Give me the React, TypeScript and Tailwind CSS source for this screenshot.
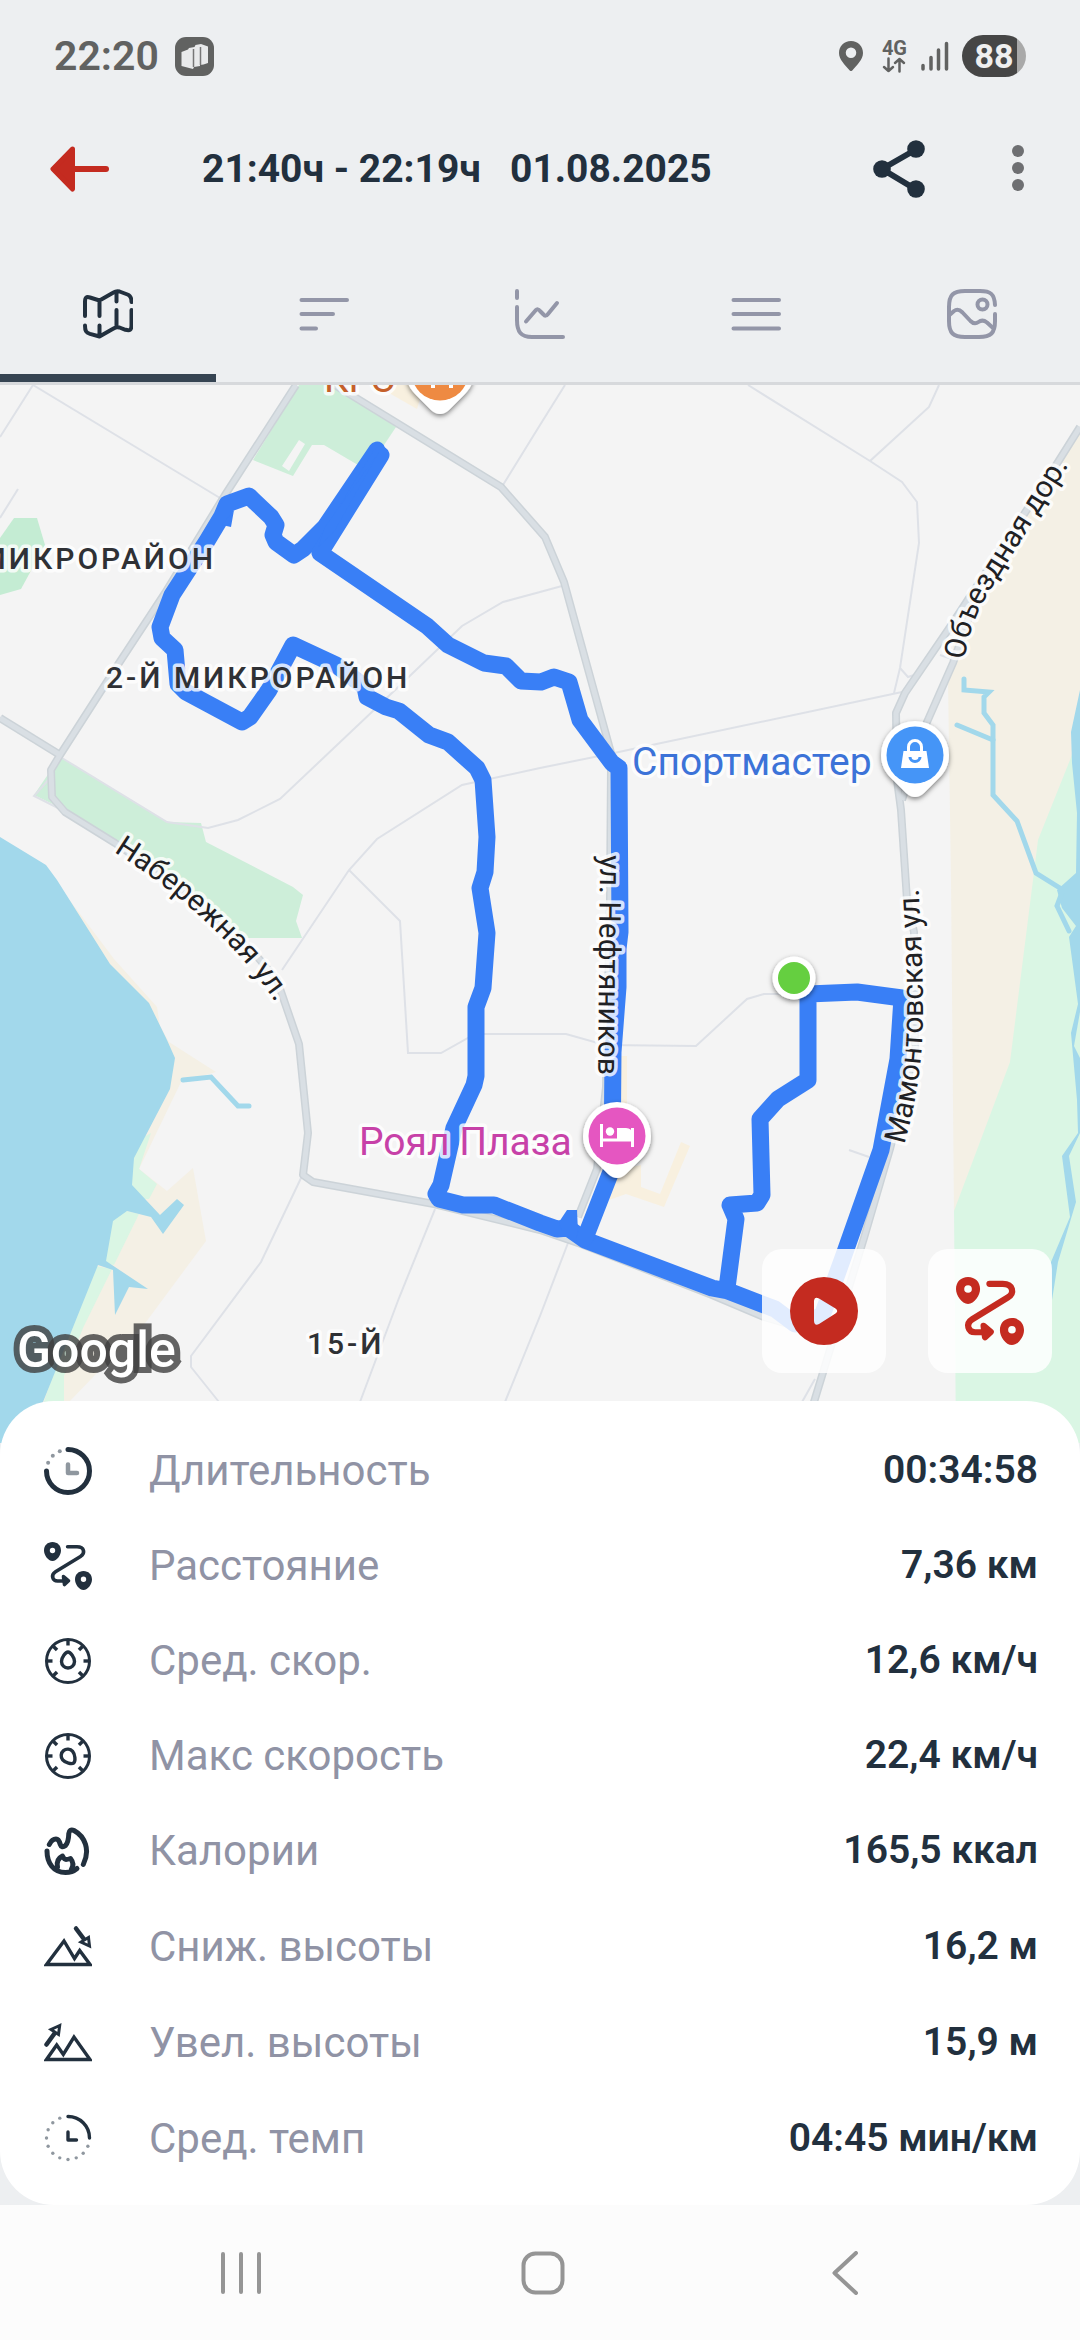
function RouteIcon({ className, stroke }: { className: string; stroke: number }) {
  return (
    <svg viewBox="0 0 48 48" className={className} fill="none" stroke="currentColor" strokeWidth={stroke} strokeLinecap="round" strokeLinejoin="round">
      <path d="M23.6 4.8H33C40.500 4.800 41.500 11.500 36.500 14.500L11.500 29.800C6.500 33 8.500 39 13.500 39H20" />
      <path d="M19.500 34.500L24.500 38.800L20.500 42.500Z" fill="currentColor" />
      <path fill="currentColor" stroke="none" fillRule="evenodd" d="M8.500 0C3.500 0 0 3.500 0 8.500C0 13 4 19 8.500 19C13 19 17 13 17 8.500C17 3.500 13.500 0 8.500 0ZM8.500 5.800A2.700 2.700 0 1 1 8.500 11.200A2.700 2.700 0 1 1 8.500 5.800Z" />
      <path fill="currentColor" stroke="none" fillRule="evenodd" d="M39.500 29C34.500 29 31 32.500 31 37.500C31 42 35 48 39.500 48C44 48 48 42 48 37.500C48 32.500 44.500 29 39.500 29ZM39.500 34.500A2.700 2.700 0 1 1 39.500 39.900A2.700 2.700 0 1 1 39.500 34.500Z" />
    </svg>
  )
}

function StatIcon({ children }: { children: React.ReactNode }) {
  return (
    <svg viewBox="0 0 48 48" className="size-12" fill="none" stroke="currentColor" strokeWidth={3.4} strokeLinecap="round" strokeLinejoin="round">
      {children}
    </svg>
  )
}

function Dots({ from, to, r }: { from: number; to: number; r: number }) {
  const dots = []
  for (let i = from; i <= to; i++) {
    const a = (i * Math.PI) / 8
    dots.push(<circle key={i} cx={24 + 21.5 * Math.sin(a)} cy={24 - 21.5 * Math.cos(a)} r={r} fill="#8f979f" stroke="none" />)
  }
  return <>{dots}</>
}

function Gauge({ angle }: { angle: number }) {
  return (
    <StatIcon>
      <circle cx="24" cy="24" r="21.500" strokeWidth={3} />
      {[-135, -90, -45, 0, 45, 90, 135].map((a) => (
        <path key={a} d="M24 3.500V8.500" strokeLinecap="butt" transform={`rotate(${a} 24 24)`} />
      ))}
      <path d="M24 15C21.500 15 17.500 20.500 17.500 24.500A6.500 6.500 0 0 0 30.500 24.500C30.500 20.500 26.500 15 24 15Z" transform={`rotate(${angle} 24 24)`} />
    </StatIcon>
  )
}

const motionStats = [
  {
    label: "Длительность",
    value: "00:34:58",
    icon: (
      <StatIcon>
        <path d="M24 2.500A21.500 21.500 0 1 1 2.500 24" strokeWidth={5} />
        <Dots from={13} to={15} r={2} />
        <path d="M24 17.500V26H33" stroke="#8f979f" strokeWidth={4.500} />
      </StatIcon>
    ),
  },
  { label: "Расстояние", value: "7,36 км", icon: <RouteIcon className="size-12" stroke={3.6} /> },
  { label: "Сред. скор.", value: "12,6 км/ч", icon: <Gauge angle={0} /> },
  { label: "Макс скорость", value: "22,4 км/ч", icon: <Gauge angle={140} /> },
  {
    label: "Калории",
    value: "165,5 ккал",
    icon: (
      <StatIcon>
        <g strokeWidth={5}>
          <path d="M39.300 37.500C46.500 23 41 9.500 30 3.500C27 2 25 3.500 24.800 6.500C24.600 12 24 16 21.500 18.500C19 20.500 17 20 16.300 17.500C15.500 14.500 14.500 12 12 12C9.500 12 7 14 5.300 17.500" />
          <path d="M3 24C3 36 9.500 45.500 21.500 45.500C26 45.500 30 44 33 41.500" />
          <path d="M13.500 40C12.500 35 14.500 31 18.500 29C19.500 31 20.500 32.500 22 32.500C23.500 32.500 25 32 26.500 31.500C28.500 34 30 38 27.500 42" />
        </g>
      </StatIcon>
    ),
  },
]

const altitudeStats = [
  {
    label: "Сниж. высоты",
    value: "16,2 м",
    icon: (
      <StatIcon>
        <g strokeLinejoin="miter">
          <path d="M2.500 42.500L20 19L30.500 36.500L35.700 28.500L46 42.500Z" />
          <path d="M32 6.500L39.500 16.500" strokeWidth={4.500} />
          <path d="M45.500 24L44.500 15.500L37 20Z" strokeWidth={3} />
        </g>
      </StatIcon>
    ),
  },
  {
    label: "Увел. высоты",
    value: "15,9 м",
    icon: (
      <StatIcon>
        <g strokeLinejoin="miter">
          <path d="M2.500 41.500L12.700 27L19.300 36.500L30 19L46 41.500Z" />
          <path d="M2.500 26.500L10.500 15.500" strokeWidth={4.500} />
          <path d="M15.700 7.500L7 11.500L14.500 16.500Z" strokeWidth={3} />
        </g>
      </StatIcon>
    ),
  },
  {
    label: "Сред. темп",
    value: "04:45 мин/км",
    icon: (
      <StatIcon>
        <path d="M24 2.500A21.500 21.500 0 0 1 45.500 24" />
        <Dots from={5} to={15} r={1.700} />
        <path d="M24 18V26H32.500" />
      </StatIcon>
    ),
  },
]

const tabs = [
  {
    name: "Карта",
    icon: (
      <path d="M2 27V13C2 8 3.500 7.500 7 8.500L16.500 11.500L30.500 3.500Q33.500 1.500 36.500 2.500L44.500 5.500Q48.500 7 48.500 13M16.500 11.500V27M33.500 3V12.500M2 36.500C2 42 3 43.500 7 44.800L16.500 47.500L30.500 39.500Q33.500 37.500 36.500 38.500L42.500 40.800C47 42 48.500 41 48.500 36V21M16.500 36.500V47.500M33.500 21V38" />
    ),
  },
  { name: "Круги", icon: <path d="M2.500 11H48M2.500 25H34M2.500 39.500H17" /> },
  {
    name: "График",
    icon: <path d="M2 2V9M2 18V31C2 43 6 48 17 48H48M11 32.500L20.500 21.500Q23 19 25 22L28.500 25.500Q30.500 28 33 25L42 14" />,
  },
  { name: "Детали", icon: <path d="M2.500 11H48M2.500 25H48M2.500 39.500H48" /> },
  {
    name: "Фото",
    icon: (
      <>
        <path d="M48 16C47.500 5 43.500 2 33 2H18C6 2 2 6 2 18V32C2 44 6 48 18 48H32C44 48 48 44 48 32V25" />
        <circle cx="35.500" cy="15.500" r="5" />
        <path d="M2.500 26L7 22Q11 19 15.500 23.500L23.500 32Q27.500 36 31.500 33Q35.500 30 40 33.500L46 39" />
      </>
    ),
  },
]

const mainRoads = [
  "M296 385L225 495L165 593L119 663L60 755L51 770L52 797L65 812L115 843L190 895L255 954L277 980L299 1044L308 1133L303 1175L313 1182L434 1204L540 1230L581 1244L712 1295L764 1317L825 1335",
  "M0 718L60 755",
  "M335 385L501 487L545 537L564 582L613 760L611 768L610 900L606 1087L597 1169L578 1217",
  "M1080 427L1053 470L950 627L905 693L896 713L897 780L901 810L907 900L914 932L915 1050L890 1149L864 1238L814 1402L800 1450",
  "M975 600L953 663L927 722L902 800",
]

const sideStreets = [
  "M220 498L33 385L0 437",
  "M18 489L0 518",
  "M503 485L540 425L565 385",
  "M562 586L540 592L503 602L462 626L393 692L280 799L238 820L208 828L167 822L62 758",
  "M51 777L34 796L62 810",
  "M902 692L614 753L540 768L462 785L377 839L349 870L282 970",
  "M349 870L400 921L408 1053L441 1053L468 1038L484 1034H566L605 1045L696 1046L747 999L764 994H790",
  "M748 385L870 461L902 482L917 502L919 543L900 668L894 693",
  "M870 461L929 407L939 385",
  "M900 668L908 677L914 675",
  "M940 655L955 660",
  "M302 1176L261 1262L191 1356V1367L219 1402",
  "M435 1209L399 1298L360 1402",
  "M568 1243L540 1316L505 1402",
  "M849 1150L869 1157",
  "M815 1379L802 1402",
]

const track = [
  "M377 450L325 527L303 549L294 555L276 542L273 535L276 525L271 517L254 501L249 496L227 504L222 516L207 541L172 595L160 627L162 638L175 650L178 684L186 692L242 722L250 717L269 690L293 645L336 665L365 687L367 697L386 707L399 711L429 735L448 742L477 768L483 780L487 837L485 872L480 888L487 933L483 988L476 1007V1076L474 1085L454 1128L441 1185L436 1194L439 1199L463 1205H494L540 1223L557 1229L568 1228L585 1240L712 1288L728 1291L775 1309L795 1324L822 1316L845 1252L881 1150L898 1059L902 998L857 992L808 994V1080L778 1099L760 1119L762 1195L757 1203L730 1205L736 1219L727 1288",
  "M381 455L320 553L427 626L448 645L484 663L506 666L521 681L541 682L554 677L569 682L580 720L612 763L619 768L620 932L618 949V987L613 1052L612 1169L585 1238",
]

function Pin({ x, y, color, children }: { x: number; y: number; color: string; children?: React.ReactNode }) {
  return (
    <g transform={`translate(${x} ${y})`}>
      <path d="M0 -34A34 34 0 0 0 -34 0C-34 10 -30 17 -24 23L-9 38Q0 46 9 38L24 23C30 17 34 10 34 0A34 34 0 0 0 0 -34Z" fill="#fff" filter="url(#shadow)" />
      <circle r="28.500" fill={color} />
      {children}
    </g>
  )
}

function MapView() {
  return (
    <svg viewBox="0 385 1080 1058" className="block w-full" role="img" aria-label="Карта маршрута">
      <defs>
        <filter id="shadow" x="-30%" y="-30%" width="160%" height="160%">
          <feDropShadow dx="0" dy="2" stdDeviation="2.500" floodOpacity="0.5" />
        </filter>
        <path id="naberezhnaya" d="M114 852C165 884 228 933 274 1000" />
        <path id="neftyanikov" d="M600 855L598 1085" />
        <path id="mamontovskaya" d="M904 1145C917 1100 923 1060 923 1010C923 970 921 930 918 880" />
        <path id="obezdnaya" d="M965 660C967 635 978 609 992 587L1072 460" />
      </defs>
      <rect y="385" width="1080" height="1058" fill="#f4f4f4" />

      {/* sand */}
      <g fill="#f4f0e5">
        <path d="M1080 427L953 640V663L948 680L951 880L954 1215L1080 1300Z" />
        <path d="M50 880L62 890L114 959L157 1007L160 1026L169 1042L216 1072L181 1082L139 1169L167 1191L193 1168L206 1241L146 1322L69 1402L40 1443L0 1443V860Z" />
      </g>
      <path fill="#f8f0df" d="M621 1056H627V1110H621ZM609 1200L626 1194L664 1207L690 1146L681 1142L660 1194L641 1187V1165L617 1170ZM375 385L417 409L424 385Z" />

      {/* parks and shore */}
      <g fill="#cdeed9">
        <path fillRule="evenodd" d="M299 385H335L396 427L384 445L358 465L324 445H312L293 476L253 460ZM299 440L305 444L289 471L282 466Z" />
        <path d="M14 518H37L45 545L21 589L0 595V538Z" fill="#c4ecd3" />
        <path d="M62 758L167 822L201 823L206 842L293 887L303 895L296 921L302 938H240L115 842L65 810L34 795L51 770Z" />
      </g>
      <g fill="#daf6e4">
        <path d="M1080 730L1070 760L1038 840L1033 880L1010 1062L954 1211L956 1443H1080Z" />
        <path d="M151 1133L139 1169L157 1184L149 1199L120 1200V1150Z" />
        <path d="M139 1214L114 1265L100 1262V1205Z" />
        <path d="M90 1265L112 1269L83 1328L64 1376V1402L50 1443H30Z" />
      </g>

      {/* water */}
      <g fill="#a2d8eb">
        <path d="M0 837L46 865L57 880L110 964L149 1003L167 1040L175 1058L170 1089L134 1158L132 1185L160 1215L177 1199L184 1205L163 1234L151 1217L127 1211L113 1221L106 1261L148 1289L129 1287L115 1315L113 1270L98 1265L43 1402L30 1443H0Z" />
        <path d="M1080 690L1071 732L1072 763L1077 813L1076 873L1057 890L1062 908L1076 926L1069 937L1078 1004L1071 1033L1077 1100L1078 1133L1062 1156L1070 1217L1051 1262L1052 1300L1058 1262L1076 1202L1069 1156L1080 1133Z" />
      </g>
      <path fill="#daf6e4" d="M1080 1012L1074 1046L1080 1058Z" />
      <g fill="none" stroke="#a2d8eb" strokeWidth="5" strokeLinecap="round">
        <path d="M183 1080L211 1077L238 1106H249" />
        <path d="M964 679V690L989 692L984 697V713L993 725V795L1017 821L1036 873L1063 890L1057 906L1069 931" />
        <path d="M957 725L993 740" />
      </g>

      {/* roads */}
      <g fill="none" stroke="#dee1e7" strokeWidth="2">
        {sideStreets.map((d) => <path key={d} d={d} />)}
      </g>
      <g fill="none" stroke="#ccd3d8" strokeWidth="8" strokeLinejoin="round">
        {mainRoads.map((d) => <path key={d} d={d} />)}
      </g>
      <g fill="none" stroke="#d9dfe4" strokeWidth="5" strokeLinejoin="round">
        {mainRoads.map((d) => <path key={d} d={d} />)}
      </g>

      {/* recorded track */}
      <g fill="none" stroke="#397ff6" strokeWidth="17" strokeLinejoin="round" strokeLinecap="round">
        {track.map((d) => <path key={d} d={d} />)}
      </g>
      <path fill="#397ff6" d="M559 1222L567 1210H577L578 1232H562ZM379 452L325 527L318 548L335 530ZM222 525L231 527L234 510Z" />

      {/* labels */}
      <g stroke="#fff" strokeOpacity="0.8" strokeWidth="7" strokeLinejoin="round" className="font-['Roboto',sans-serif] [paint-order:stroke]">
        <g fill="#2f3135" className="text-[30px] font-medium tracking-widest">
          <text x="216" y="569" textAnchor="end">МИКРОРАЙОН</text>
          <text x="106" y="688">2-Й МИКРОРАЙОН</text>
          <text x="307" y="1354">15-Й</text>
        </g>
        <g fill="#1f2124" className="text-[30px]">
          <text><textPath href="#naberezhnaya">Набережная ул.</textPath></text>
          <text><textPath href="#neftyanikov">ул. Нефтяников</textPath></text>
          <text><textPath href="#mamontovskaya">Мамонтовская ул.</textPath></text>
          <text><textPath href="#obezdnaya">Объездная дор.</textPath></text>
        </g>
        <g className="text-[39px]">
          <text x="632" y="775" fill="#3c73d8">Спортмастер</text>
          <text x="359" y="1155" fill="#c741a8">Роял Плаза</text>
          <text x="324" y="392" fill="#c5602a">KFC</text>
        </g>
      </g>

      <Pin x={915} y={755} color="#4595f7">
        <path d="M-11.500 -4H11.500L14 13H-14Z" fill="#fff" />
        <path d="M-6.500 -4V-8A6.500 6.500 0 0 1 6.500 -8V-4" fill="none" stroke="#fff" strokeWidth="3" />
        <path d="M-5 2A5 4.500 0 0 0 5 2" fill="none" stroke="#4595f7" strokeWidth="3" />
      </Pin>
      <Pin x={617} y={1136} color="#e556c1">
        <path d="M-15.500 -12V11M-15.500 4H15.500M15.500 -8V11" fill="none" stroke="#fff" strokeWidth="3" />
        <circle cx="-7" cy="-4.500" r="4.200" fill="#fff" />
        <path d="M0 4V-8H9Q15 -8 15 -2V4Z" fill="#fff" />
      </Pin>
      <Pin x={440} y={372} color="#ee8a42">
        <path d="M-7 4V16M11 4V16" stroke="#fff" strokeWidth="4" />
      </Pin>

      <circle cx="794" cy="978" r="21.500" fill="#fff" filter="url(#shadow)" />
      <circle cx="794" cy="978" r="16" fill="#65cf40" />

      <text x="17" y="1367" fill="#fff" stroke="#3f3f3f" strokeOpacity="0.8" strokeWidth="12" className="font-['Roboto',sans-serif] text-[50px] font-medium [paint-order:stroke]">Google</text>
    </svg>
  )
}

function StatusBar() {
  return (
    <div className="flex h-28 items-center justify-between px-[54px] text-[#616261]">
      <div className="flex items-center gap-4">
        <span className="text-[41px] font-semibold leading-none">22:20</span>
        <svg viewBox="0 0 39 39" className="size-[39px]">
          <rect width="39" height="39" rx="11" fill="currentColor" />
          <path d="M6.500 15L13 12.500L14 11L19.500 10L20.500 8L26 7L33 9.500V26L28.500 27.500L25 28V29L19 30L18 32L6.500 29Z" fill="#e9eaeb" />
          <path d="M18.500 12V30M25.500 10V28" stroke="#777" strokeWidth="1.500" />
        </svg>
      </div>
      <div className="flex items-center">
        <svg viewBox="0 0 24 30" className="mr-[19px] h-[30px] w-6" fill="currentColor">
          <path fillRule="evenodd" d="M12 0C5 0 0 5 0 12C0 18.500 6 24 10.500 29.300Q12 30.800 13.500 29.300C18 24 24 18.500 24 12C24 5 19 0 12 0ZM12 6.500A5 5 0 1 1 12 17A5 5 0 1 1 12 6.500Z" />
        </svg>
        <div className="mr-[14px] flex flex-col items-center">
          <span className="text-xl font-bold leading-[18px]">4G</span>
          <svg viewBox="0 0 24 16" className="h-4 w-6" fill="none" stroke="currentColor" strokeWidth="2.500" strokeLinecap="round" strokeLinejoin="round">
            <path d="M6.500 1.500V14M2 10L6.500 14L11 10M17.500 14.500V2M13 6L17.500 2L22 6" />
          </svg>
        </div>
        <svg viewBox="0 0 28 30" className="mr-[13px] h-[30px] w-7" stroke="currentColor" strokeWidth="3.500" strokeLinecap="round">
          <path d="M2 24.500V28M10 16.500V28M17.500 9V28M25.500 2.500V28" />
        </svg>
        <span className="flex h-[42px] w-16 items-center justify-center rounded-full bg-[linear-gradient(90deg,#464646_86%,#a9a9a9_86%)] text-[34px] font-bold leading-none text-[#efefef]">88</span>
      </div>
    </div>
  )
}

function Stats({ items, rowClass }: { items: typeof motionStats; rowClass: string }) {
  return (
    <dl>
      {items.map((item) => (
        <div key={item.label} className={`flex items-center ${rowClass}`}>
          {item.icon}
          <dt className="ml-[57px] flex-1 text-[42px] text-[#9093a5]">{item.label}</dt>
          <dd className="text-[39px] font-semibold">{item.value}</dd>
        </div>
      ))}
    </dl>
  )
}

function App() {
  return (
    <div className="flex min-h-dvh flex-col bg-[#edeff1] font-['Roboto',sans-serif] text-[#22303e]">
      <header className="border-b-3 border-[#d7d9dc]">
        <StatusBar />
        <div className="flex h-[114px] items-center pl-[50px] pr-14">
          <button aria-label="Назад" className="text-[#c42b20]">
            <svg viewBox="0 0 60 48" className="h-12 w-[60px]" stroke="currentColor" strokeWidth="5" strokeLinecap="round" strokeLinejoin="round">
              <path d="M22.500 4L3 24L22.500 44Z" fill="currentColor" />
              <path d="M24 24H56" strokeWidth="6" />
            </svg>
          </button>
          <h1 className="ml-[92px] flex-1 whitespace-pre text-[39px] font-bold">21:40ч - 22:19ч   01.08.2025</h1>
          <button aria-label="Поделиться">
            <svg viewBox="0 0 52 58" className="h-[58px] w-[52px]" fill="currentColor">
              <path d="M43 9.500L9 29L43 49.500" fill="none" stroke="currentColor" strokeWidth="6" />
              <circle cx="43" cy="9" r="8.800" />
              <circle cx="9" cy="29" r="8.800" />
              <circle cx="43" cy="49" r="8.800" />
            </svg>
          </button>
          <button aria-label="Ещё" className="ml-[87px] text-[#6e6f72]">
            <svg viewBox="0 0 12 48" className="h-12 w-3" fill="currentColor">
              <circle cx="6" cy="6" r="6" />
              <circle cx="6" cy="23" r="6" />
              <circle cx="6" cy="40" r="6" />
            </svg>
          </button>
        </div>
        <nav role="tablist" className="grid grid-cols-5">
          {tabs.map((tab, i) => (
            <button
              key={tab.name}
              role="tab"
              aria-label={tab.name}
              aria-selected={i === 0}
              className={`flex h-[156px] items-center justify-center border-b-8 pt-7 ${i === 0 ? "border-[#364452]" : "border-transparent text-[#9396a8]"}`}
            >
              <svg viewBox="0 0 50 50" className="size-[50px]" fill="none" stroke="currentColor" strokeWidth="4" strokeLinecap="round" strokeLinejoin="round">
                {tab.icon}
              </svg>
            </button>
          ))}
        </nav>
      </header>

      <main className="flex-1">
        <section className="relative overflow-hidden">
          <MapView />
          <div className="absolute bottom-[70px] right-7 flex gap-[42px] text-[#c42b20]">
            <button aria-label="Воспроизвести" className="flex size-[124px] items-center justify-center rounded-[20px] bg-white/85">
              <svg viewBox="0 0 68 68" className="size-[68px]" fill="currentColor">
                <path fillRule="evenodd" d="M34 0A34 34 0 1 1 34 68A34 34 0 1 1 34 0ZM24 24V44Q24.500 49.500 29 47L45.500 36.500Q49 34 45.500 31.500L29 21.500Q24.500 19 24 24Z" />
              </svg>
            </button>
            <button aria-label="Маршрут" className="flex size-[124px] items-center justify-center rounded-[20px] bg-white/85">
              <RouteIcon className="size-[68px]" stroke={4.400} />
            </button>
          </div>
        </section>

        <section className="relative -mt-[42px] rounded-[54px] bg-white pb-[19px] pl-11 pr-[42px] pt-[22px]">
          <Stats items={motionStats} rowClass="h-[95px]" />
          <Stats items={altitudeStats} rowClass="h-24" />
        </section>
      </main>

      <nav className="grid h-[135px] grid-cols-3 bg-[#fcfcfc] pl-[90px] pr-[84px] text-[#959595]">
        <button aria-label="Недавние" className="flex items-center justify-center">
          <svg viewBox="0 0 44 44" className="size-11" stroke="currentColor" strokeWidth="4" strokeLinecap="round">
            <path d="M4 3V41M22 3V41M40 3V41" />
          </svg>
        </button>
        <button aria-label="Домой" className="flex items-center justify-center">
          <svg viewBox="0 0 44 44" className="size-11" fill="none" stroke="currentColor" strokeWidth="4">
            <rect x="2.500" y="2.500" width="39" height="39" rx="12" />
          </svg>
        </button>
        <button aria-label="Назад" className="flex items-center justify-center">
          <svg viewBox="0 0 44 44" className="size-11" fill="none" stroke="currentColor" strokeWidth="4" strokeLinecap="round" strokeLinejoin="round">
            <path d="M33 2L11.500 22L33 42" />
          </svg>
        </button>
      </nav>
    </div>
  )
}

export default App
